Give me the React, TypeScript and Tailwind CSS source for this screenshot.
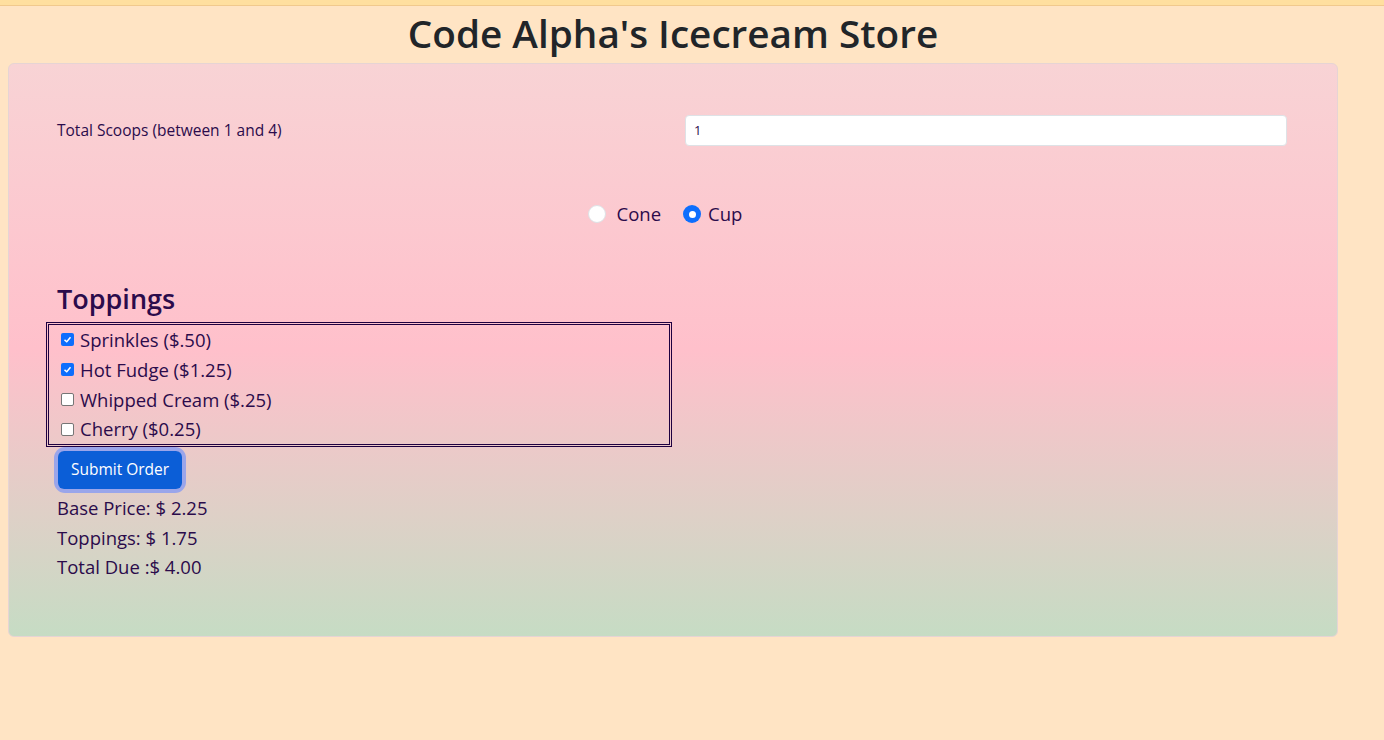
import React from "react";

export default function App() {
  const toppings = [
    { label: "Sprinkles ($.50)", checked: true },
    { label: "Hot Fudge ($1.25)", checked: true },
    { label: "Whipped Cream ($.25)", checked: false },
    { label: "Cherry ($0.25)", checked: false },
  ];
  return (
    <div className="min-h-[740px] bg-[#ffe4c4] font-['Open_Sans',sans-serif] text-[#2b0b4b]">
      <div className="h-[6px] bg-[#ffdf9f] border-b border-[#f1c98d]" />
      <div className="w-[1346px] px-2">
        <h1 className="text-center text-[38.7px] font-semibold leading-[48px] text-[#212529] mt-[3px] mb-[6px]">
          Code Alpha&apos;s Icecream Store
        </h1>
        <div className="rounded-md border border-[#e6d4d4] bg-[linear-gradient(#f8d3d5,#ffc0cb,#c6dcc4)] px-[48px] pt-[51px] pb-[54px]">
          <div className="flex items-center h-[31px]">
            <div className="w-[628px] text-[15.5px]">Total Scoops (between 1 and 4)</div>
            <div className="flex-1">
              <div className="h-[31px] w-[602px] bg-white border border-[#dee2e6] rounded-[4px] flex items-center pl-[8px] text-[13px]">
                1
              </div>
            </div>
          </div>
          <div className="mt-[54px] flex justify-center h-[28px] items-center text-[18.5px] pr-[16px]">
            <div className="flex items-center">
              <span className="w-[18px] h-[18px] rounded-full bg-white border border-[#dee2e6]" />
              <span className="ml-[11px]">Cone</span>
            </div>
            <div className="flex items-center ml-[22px]">
              <span className="w-[18px] h-[18px] rounded-full bg-[#0d6efd] flex items-center justify-center">
                <span className="w-[7px] h-[7px] rounded-full bg-white" />
              </span>
              <span className="ml-[7px]">Cup</span>
            </div>
          </div>
          <h3 className="mt-[54px] text-[27px] font-semibold leading-[34px]">Toppings</h3>
          <div className="mt-[6px] ml-[-11px] w-[626px] border-[3px] border-double border-[#1e0040] pl-[12px]">
            {toppings.map((t) => (
              <div key={t.label} className="flex items-center h-[29.75px] text-[18.5px]">
                {t.checked ? (
                  <span className="w-[13px] h-[13px] rounded-[2px] bg-[#0d6efd] flex items-center justify-center">
                    <svg width="9" height="9" viewBox="0 0 12 12">
                      <path d="M2 6.5 L5 9 L10 3" stroke="white" strokeWidth="2" fill="none" />
                    </svg>
                  </span>
                ) : (
                  <span className="w-[13px] h-[13px] rounded-[2px] bg-white border border-[#767676]" />
                )}
                <span className="ml-[6px]">{t.label}</span>
              </div>
            ))}
          </div>
          <div className="mt-[4px] ml-[1px] inline-block rounded-[7px] ring-4 ring-[#9aa5ea]">
            <button className="block h-[38px] w-[124px] rounded-[6px] bg-[#0b5ed7] text-white text-[15.5px]">
              Submit Order
            </button>
          </div>
          <div className="mt-[4px] text-[18.5px] leading-[29.5px]">
            <div>Base Price: $ 2.25</div>
            <div>Toppings: $ 1.75</div>
            <div>Total Due :$ 4.00</div>
          </div>
        </div>
      </div>
    </div>
  );
}
